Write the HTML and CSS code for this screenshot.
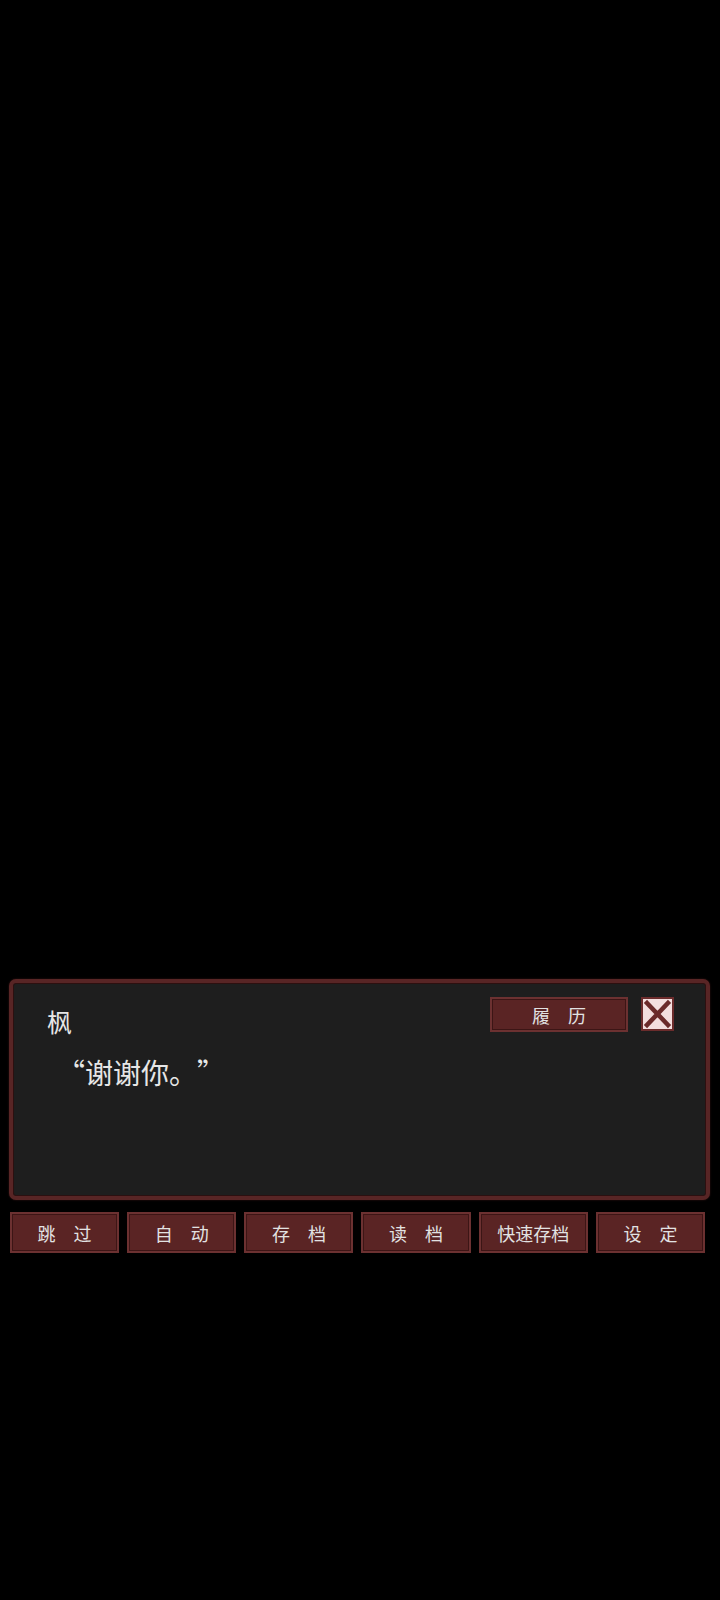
FILE: index.html
```html
<!DOCTYPE html>
<html lang="zh-CN">
<head>
    <meta charset="UTF-8">
    <meta name="viewport" content="width=device-width, initial-scale=1.0">
    <title>对话</title>
    <link rel="stylesheet" href="styles.css">
</head>
<body>
    <div class="screen">
        <div class="dialog">
            <div class="dialog-head">
                <div class="speaker">枫</div>
                <div class="head-tools">
                    <button class="btn btn-log">履　历</button>
                    <button class="btn-close" aria-label="关闭">
                        <svg width="29" height="30" viewBox="0 0 29 30">
                            <path d="M4 4 L25 26 M25 4 L4 26" stroke="#6b2a2a" stroke-width="4.5" stroke-linecap="square"/>
                        </svg>
                    </button>
                </div>
            </div>
            <div class="line">“谢谢你。”</div>
        </div>

        <div class="menu">
            <button class="btn">跳　过</button>
            <button class="btn">自　动</button>
            <button class="btn">存　档</button>
            <button class="btn">读　档</button>
            <button class="btn">快速存档</button>
            <button class="btn">设　定</button>
        </div>
    </div>
</body>
</html>
```

FILE: styles.css
```css
html, body {
    margin: 0;
    background: #000;
}
body {
    font-family: "Noto Sans CJK SC", "Noto Sans", sans-serif;
    color: #e6e6e6;
    text-spacing-trim: space-all;
}
.screen {
    width: 720px;
    height: 1600px;
    padding-top: 979px;
    box-sizing: border-box;
}
.dialog {
    margin-left: 9px;
    width: 701px;
    height: 221px;
    box-sizing: border-box;
    background: #1e1e1e;
    border: 4px solid #582525;
    border-radius: 7px;
    box-shadow: inset 0 0 0 1px #2c1010, 0 0 2px #3a1515;
    padding: 14px 32px 0 34px;
}
.dialog-head {
    display: flex;
    justify-content: space-between;
    align-items: flex-start;
}
.speaker {
    margin-top: 9px;
    font-size: 25px;
    line-height: 30px;
}
.head-tools {
    display: flex;
    gap: 13px;
}
.line {
    margin-top: 19px;
    padding-left: 10px;
    font-size: 28px;
    line-height: 34px;
}
.btn {
    font-family: "Noto Sans CJK SC", "Noto Sans", sans-serif;
    font-size: 18px;
    color: #e2e2e2;
    background: #5a2424;
    border: 2px solid #6c3131;
    box-shadow: inset 0 0 0 1px #3c1515;
    padding: 0;
    cursor: pointer;
}
.btn-log {
    width: 138px;
    height: 35px;
}
.btn-close {
    width: 33px;
    height: 34px;
    padding: 0;
    border: 2px solid #6b2c2c;
    background: #f3dede;
    display: flex;
    align-items: center;
    justify-content: center;
    cursor: pointer;
}
.menu {
    margin-top: 12px;
    padding-left: 10px;
    width: 705px;
    box-sizing: border-box;
    display: grid;
    grid-template-columns: repeat(6, 1fr);
    gap: 8px;
}
.menu .btn {
    height: 41px;
}
```
